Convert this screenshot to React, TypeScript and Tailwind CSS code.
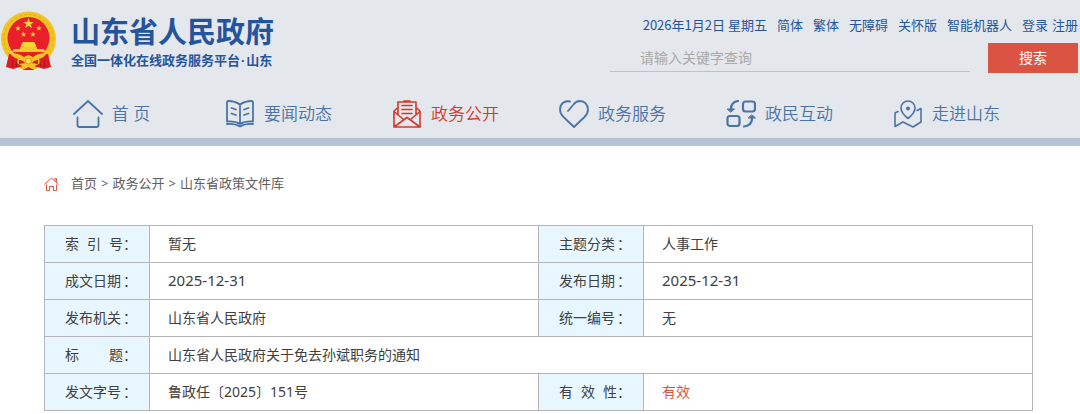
import type { ReactNode } from 'react';

const TOP_LINKS = ['简体', '繁体', '无障碍', '关怀版', '智能机器人'];

function Stroke({ children }: { children: ReactNode }) {
  return (
    <svg
      viewBox="0 0 30 28"
      className="h-7 w-[30px] shrink-0"
      fill="none"
      stroke="currentColor"
      strokeWidth="1.8"
      strokeLinecap="round"
      strokeLinejoin="round"
      aria-hidden="true"
    >
      {children}
    </svg>
  );
}

const NAV: { label: string; active?: boolean; icon: ReactNode }[] = [
  {
    label: '首 页',
    icon: <path d="M1 14 15 1l14 13M4.500 17.500V25q0 2 2 2h17q2 0 2-2v-7.500" />,
  },
  {
    label: '要闻动态',
    icon: (
      <path d="M15 4.500Q10 1 3.500 1 2 1 2 2.500v19q8-.5 13 2.500 5-3 13-2.500v-19Q28 1 26.500 1 20 1 15 4.500V24M2 24q8-.5 13 2.500 5-3 13-2.500M6.500 8l4.500 1.500M6.500 13.500 11 15M23.500 8 19 9.500M23.500 13.500 19 15" />
    ),
  },
  {
    label: '政务公开',
    active: true,
    icon: (
      <path
        strokeWidth="1.6"
        d="M6 14V2h18v12M12 1h6M10 5.500h10M10 9.500h10M10 13.500h10M6 7.500 2 11v16h26V11l-4-3.500M2 11.500l9 7.500M28 11.500 19 19M2 27l13-9.500L28 27"
      />
    ),
  },
  {
    label: '政务服务',
    icon: (
      <path d="M11 1.500C5 .2 1 4 1 9.500c0 3 1.500 5.500 3.500 7.500L15 27l10.500-10c2-2 3.500-4.500 3.500-7.500C29 4.500 25.500 1 21 1c-3 0-5 1.500-6.500 3.500L9 11" />
    ),
  },
  {
    label: '政民互动',
    icon: (
      <g strokeWidth="2.200">
        <rect x="17" y="1.500" width="12" height="10" rx="2.500" />
        <rect x="1.500" y="16" width="12" height="10" rx="2.500" />
        <path d="M12 1Q5 2 5 9M18 26.500q8-1 8-8" />
        <path d="M1.500 9h7L5 12zM22.500 18h7L26 15z" fill="currentColor" strokeWidth="1" />
      </g>
    ),
  },
  {
    label: '走进山东',
    icon: (
      <g strokeWidth="1.6">
        <path d="M5 11.500 2 13v13.500L10 22l10 5 8-5V8.500l-4 2M15 18.500S8 13 8 8a7 7 0 0 1 14 0c0 5-7 10.500-7 10.500z" />
        <circle cx="15" cy="8.500" r="1.200" fill="currentColor" />
      </g>
    ),
  },
];

function Emblem() {
  return (
    <svg viewBox="0 0 58 60" className="h-[60px] w-[58px] shrink-0" aria-hidden="true">
      <circle cx="28.500" cy="28" r="27.500" fill="#f4c522" />
      <circle cx="28.500" cy="28" r="24.500" fill="none" stroke="#e0ab1a" strokeDasharray="3 2" />
      <circle cx="28.500" cy="27" r="21" fill="#e9202a" />
      <g fill="#fbd437">
        <path d="m28.500 7 1.300 3.900h4.100l-3.300 2.400 1.300 4-3.400-2.500-3.400 2.500 1.300-4-3.300-2.400h4.100z" />
        <path id="star" d="m18 14.500.7 2h2.100l-1.700 1.300.6 2-1.700-1.200-1.700 1.200.6-2-1.700-1.300h2.100z" />
        <use href="#star" x="21" />
        <use href="#star" x="5.500" y="6" />
        <use href="#star" x="15" y="6" />
        <path d="M23 31h11l2 3v3H21v-3z" />
      </g>
      <path d="M9 43h39l3 13-7 2-7-2-4 3h-9l-4-3-7 2-7-2z" fill="#dd1c22" />
      <path d="M14 38h30l1 3H12z" fill="#f6c92b" />
      <path d="M20 36h17v3H20z" fill="#f6c92b" />
      <path d="M10 42q9 0 14 4l4.500-2 4.500 2q5-4 14-4-2 4-8 6l1 4-5 3 2 3h-5l-3.500-2-3.500 2h-5l2-3-5-3 1-4q-6-2-8-6z" fill="#f1c325" />
      <path d="M19 49q4 0 6 3l-6 1zM38 49q-4 0-6 3l6 1z" fill="#dd1c22" />
      <circle cx="28.500" cy="50" r="3" fill="#f9dc4e" stroke="#d99a18" />
      <path d="M13 49l-1 7M17 51l-1 5M44 49l1 7M40 51l1 5" fill="none" stroke="#a9131a" />
    </svg>
  );
}

function Label({ text }: { text: string }) {
  return (
    <th scope="row" className="border border-[#b5b5b9] bg-[#e8f7ff] pl-5 text-left font-normal">
      <span className="flex">
        <span className="flex w-[58px] justify-between">
          {text.split(' ').map((part) => (
            <span key={part}>{part}</span>
          ))}
        </span>
        ：
      </span>
    </th>
  );
}

function Value({ children, wide, className = '' }: { children: ReactNode; wide?: boolean; className?: string }) {
  return (
    <td colSpan={wide ? 3 : 1} className={`border border-[#b5b5b9] pl-[18px] ${className}`}>
      {children}
    </td>
  );
}

export default function App() {
  return (
    <div className="bg-white font-['Noto_Sans','Noto_Sans_CJK_SC',sans-serif] text-[#404040]">
      <header className="border-b-8 border-[#b4c4d5] bg-[#e4e7ec] text-[#24559c]">
        <div className="flex h-[90px] justify-between">
          <a href="#" className="flex gap-[13px] pt-[11px]">
            <Emblem />
            <span className="flex flex-col font-['Noto_Sans_CJK_SC',sans-serif] font-bold whitespace-nowrap">
              <span className="text-[29px] leading-[38px]">山东省人民政府</span>
              <span className="text-[13px] leading-[22px]">
                全国一体化在线政务服务平台<span className="px-px font-['Liberation_Sans']">·</span>山东
              </span>
            </span>
          </a>
          <div className="flex w-[470px] flex-col pt-4 pr-0.5">
            <div className="flex justify-end gap-[10px] text-[13px] leading-[18px] whitespace-nowrap">
              <span className="font-['Noto_Sans_CJK_SC',sans-serif]">2026年1月2日 星期五</span>
              {TOP_LINKS.map((link) => (
                <a key={link} href="#">{link}</a>
              ))}
              <span className="flex gap-1">
                <a href="#">登录</a>
                <a href="#">注册</a>
              </span>
            </div>
            <form className="mt-[9px] flex justify-between">
              <input
                type="text"
                aria-label="请输入关键字查询"
                placeholder="请输入关键字查询"
                className="h-[29px] w-[360px] border-b border-[#b4c4d5] bg-transparent pl-[30px] text-sm placeholder:text-[#a9a9a9]"
              />
              <button type="button" className="h-[30px] w-[90px] bg-[#db5443] text-sm text-white">
                搜索
              </button>
            </form>
          </div>
        </div>
        <nav className="mr-[50px] ml-7 grid h-12 grid-cols-6 text-[17px] text-[#4a74a8]">
          {NAV.map((item) => (
            <a
              key={item.label}
              href="#"
              className={`flex items-center justify-center gap-[9px] whitespace-nowrap ${item.active ? 'text-[#d13a2b]' : ''}`}
            >
              <Stroke>{item.icon}</Stroke>
              <span className="font-[350]">{item.label}</span>
            </a>
          ))}
        </nav>
      </header>

      <main className="mr-[47px] ml-11 pb-1">
        <div className="flex h-[79px] items-center gap-3 pb-1 text-[13px] text-[#606060]">
          <svg viewBox="0 0 15 14" className="h-[14px] w-[15px] text-[#db5443]" fill="none" stroke="currentColor" aria-hidden="true">
            <path d="M.5 7.500 7.500 1l7 6.500M11 4V1.500h1.500v4M2.500 7.500v6h3V9.500h4v4h3v-6" />
          </svg>
          <div className="flex gap-1">
            <a href="#">首页</a>
            <span>&gt;</span>
            <a href="#">政务公开</a>
            <span>&gt;</span>
            <a href="#">山东省政策文件库</a>
          </div>
        </div>
        <table className="w-full table-fixed border-collapse text-sm">
          <colgroup>
            <col className="w-[105px]" />
            <col />
            <col className="w-[105px]" />
            <col />
          </colgroup>
          <tbody>
            <tr className="h-[37px]">
              <Label text="索 引 号" />
              <Value>暂无</Value>
              <Label text="主题分类" />
              <Value>人事工作</Value>
            </tr>
            <tr className="h-[37px]">
              <Label text="成文日期" />
              <Value className="text-[15px]">2025-12-31</Value>
              <Label text="发布日期" />
              <Value className="text-[15px]">2025-12-31</Value>
            </tr>
            <tr className="h-[37px]">
              <Label text="发布机关" />
              <Value>山东省人民政府</Value>
              <Label text="统一编号" />
              <Value>无</Value>
            </tr>
            <tr className="h-[37px]">
              <Label text="标 题" />
              <Value wide>山东省人民政府关于免去孙斌职务的通知</Value>
            </tr>
            <tr className="h-[37px]">
              <Label text="发文字号" />
              <Value>鲁政任〔2025〕151号</Value>
              <Label text="有 效 性" />
              <Value className="text-[#db5443]">有效</Value>
            </tr>
          </tbody>
        </table>
      </main>
    </div>
  );
}
